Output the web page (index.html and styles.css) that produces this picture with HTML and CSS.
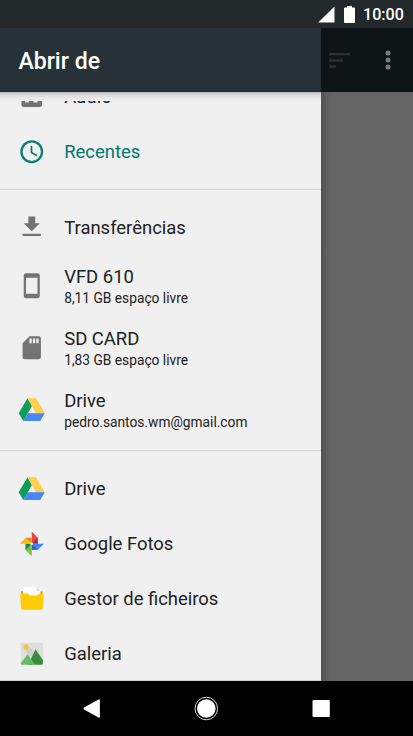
FILE: index.html
```html
<!DOCTYPE html>
<html lang="pt">
<head>
<meta charset="utf-8">
<title>Abrir de</title>
<link rel="stylesheet" href="styles.css">
</head>
<body>
<div class="screen">
  <header class="status">
    <svg class="signal" viewBox="0 0 17 17"><path d="M16.5.5v16H.2z"/></svg>
    <svg class="battery" viewBox="0 0 11 17"><path d="M3 0h5v1.5h2q1 0 1 1V16q0 1-1 1H1q-1 0-1-1V2.500q0-1 1-1h2z"/></svg>
    <span class="time">10:00</span>
  </header>
  <div class="bars">
    <h1 class="title">Abrir de</h1>
    <div class="actions">
      <svg class="sort" viewBox="0 0 21 15"><path d="M0 0h21v2.300H0zM0 6.200h14v2.300H0zM0 12.300h7v2.300H0z"/></svg>
      <svg class="more" viewBox="0 0 6 20"><circle cx="3" cy="3" r="2.500"/><circle cx="3" cy="10" r="2.500"/><circle cx="3" cy="17" r="2.500"/></svg>
    </div>
  </div>
  <div class="content">
    <nav class="drawer">
      <div class="viewport">
        <div class="list">
          <div class="row">
            <svg class="icon" viewBox="0 0 24 24"><path d="M3 3h18v16q0 2-2 2H5q-2 0-2-2zM6.300 11v6h3.200v-6zM13.500 11v6h3.500v-6z" fill-rule="evenodd"/></svg>
            <span class="label">Áudio</span>
          </div>
          <div class="row active">
            <svg class="icon" viewBox="0 0 24 24"><path d="M11.990 2C6.470 2 2 6.480 2 12s4.470 10 9.990 10C17.520 22 22 17.520 22 12S17.520 2 11.990 2zM12 20a8 8 0 1 1 0-16 8 8 0 0 1 0 16zM12.500 7H11v6l5.250 3.150.75-1.230-4.500-2.670z"/></svg>
            <span class="label">Recentes</span>
          </div>
          <hr class="divider">
          <div class="row">
            <svg class="icon" viewBox="0 0 24 24"><path d="M19 9h-4V3H9v6H5l7 7 7-7zM4 18v2h16v-2H4z"/></svg>
            <span class="label">Transferências</span>
          </div>
          <div class="row double">
            <svg class="icon" viewBox="0 0 24 24"><path d="M17 1H7a2 2 0 0 0-2 2v18a2 2 0 0 0 2 2h10a2 2 0 0 0 2-2V3a2 2 0 0 0-2-2zm0 18H7V5h10v14z"/></svg>
            <div class="text"><span class="label">VFD 610</span><span class="sub">8,11 GB espaço livre</span></div>
          </div>
          <div class="row double">
            <svg class="icon" viewBox="0 0 24 24"><path d="M18 2h-8L4.020 8 4 20a2 2 0 0 0 2 2h12a2 2 0 0 0 2-2V4a2 2 0 0 0-2-2zm-6 6h-2V4h2v4zm3 0h-2V4h2v4zm3 0h-2V4h2v4z"/></svg>
            <div class="text"><span class="label">SD CARD</span><span class="sub">1,83 GB espaço livre</span></div>
          </div>
          <div class="row double">
            <svg class="icon" viewBox="0 0 24 24"><path fill="#109d59" d="M8.300 2 12.200 8.700 4.700 21.800.600 15z"/><path fill="#ffd04b" d="M8.300 2h7.400l7.700 13h-7.700z"/><path fill="#4587f4" d="M8.500 15h14.900l-4 6.800H4.700z"/></svg>
            <div class="text"><span class="label">Drive</span><span class="sub">pedro.santos.wm@gmail.com</span></div>
          </div>
          <hr class="divider">
          <div class="row">
            <svg class="icon" viewBox="0 0 24 24"><path fill="#109d59" d="M8.300 2 12.200 8.700 4.700 21.800.600 15z"/><path fill="#ffd04b" d="M8.300 2h7.400l7.700 13h-7.700z"/><path fill="#4587f4" d="M8.500 15h14.900l-4 6.800H4.700z"/></svg>
            <span class="label">Drive</span>
          </div>
          <div class="row">
            <svg class="icon" viewBox="0 0 24 24"><path fill="#df4b3e" d="M12 1.200 17.200 6.800V12H12z"/><path fill="#a52a4b" d="M12 12l5.200-5.200V12z"/><path fill="#4285f4" d="M12 12h10.700l-5.400 5.200H12z"/><path fill="#3163c5" d="M12 12l5.300 5.200H12z"/><path fill="#7cc04b" d="M12 12v10.800l-5.400-5.400V12z"/><path fill="#188a4c" d="M12 12l-5.400 5.400V12z"/><path fill="#fbbc16" d="M12 12H1.300l5.400-5.300H12z"/><path fill="#ee8b22" d="M12 12 6.700 6.700H12z"/><circle cx="12" cy="12" r="1.200" fill="#f5e8df"/></svg>
            <span class="label">Google Fotos</span>
          </div>
          <div class="row">
            <svg class="icon" viewBox="0 0 24 24"><path fill="#d9971d" d="M2.600 5.500h18.800V15H2.600z"/><path fill="#fcfcfc" d="M4.300 1.700h12l3.300 3.500V15H4.300z"/><path fill="#dedede" d="M16.300 1.700l3.300 3.500h-3.300z"/><path fill="#fecb05" d="M2.600 7.500h6l2 1.700h6l2-1.300h3q.6 0 .6.700l-.4 11.200q-.1 1.800-1.600 1.800H4q-1.200 0-1.300-1.800L2 8.400q0-.9.600-.9z"/></svg>
            <span class="label">Gestor de ficheiros</span>
          </div>
          <div class="row">
            <svg class="icon" viewBox="0 0 24 24"><rect x="2.300" y="2.300" width="19.400" height="19.400" rx="1.200" fill="#dfdfdf"/><path fill="#cfcfcf" d="M8.500 4.500l7 7-5 3-5-7z"/><circle cx="6.900" cy="6" r="2.300" fill="#f4c62b"/><path fill="#388e3c" d="M15.300 8l6.400 9.500v3q0 1.200-1.200 1.200H9z"/><path fill="#66bb6a" d="M8.400 12.500 15 21.700H3.500q-1.200 0-1.200-1.200z"/></svg>
            <span class="label">Galeria</span>
          </div>
        </div>
      </div>
    </nav>
    <div class="scrim"></div>
  </div>
  <footer class="nav">
    <svg class="keys" viewBox="0 0 413 55"><path d="M84 26.500 98.500 18.500q1.400-.7 1.400.9v16.200q0 1.600-1.400.9L84 28.600q-1.300-1 0-2.100z"/><circle class="ring" cx="206.300" cy="27.500" r="11.300"/><circle cx="206.300" cy="27.500" r="9.300"/><rect x="312.500" y="19" width="17.300" height="17" rx="1"/></svg>
  </footer>
</div>
</body>
</html>
```
FILE: styles.css
```css
* { box-sizing: border-box; }
body { margin: 0; font-family: Roboto, "Liberation Sans", sans-serif; }
svg { display: block; flex: none; }
.screen { width: 413px; height: 736px; display: flex; flex-direction: column; overflow: hidden; background: #f0f0f0; }
.status { height: 28px; flex: none; display: flex; align-items: center; justify-content: flex-end; padding-right: 9px; background: #23282b; color: #fff; fill: #fff; }
.signal { width: 17px; height: 17px; margin-right: 9px; }
.battery { width: 11px; height: 17px; margin-right: 8px; }
.time { width: 41px; padding-top: 1px; font-size: 16.1px; font-weight: 500; line-height: 28px; white-space: nowrap; }
.bars { height: 64px; flex: none; display: flex; }
.title { width: 321px; margin: 0; padding: 2px 0 0 18.400px; background: #263238; color: #fff; font-size: 23.100px; font-weight: 500; line-height: 64px; }
.actions { flex: 1; display: flex; align-items: center; padding-left: 8px; background: #0f1417; }
.sort { width: 21px; height: 15px; margin-right: 35px; fill: #2c3032; }
.more { width: 6px; height: 20px; fill: #777a7b; }
.content { height: 589px; flex: none; display: flex; }
.drawer { width: 321px; padding-top: 9px; background: linear-gradient(#b8b8b8, #dadada 3px, #ebebeb 7px, #f0f0f0 10px); }
.viewport { height: 580px; overflow: hidden; border-bottom: 1px solid #d0d0d0; }
.list { margin-top: -31.300px; }
.row { height: 55.100px; display: flex; align-items: center; padding-left: 18.400px; color: #212121; }
.double { height: 62px; }
.icon { width: 27.500px; height: 27.500px; margin: 0 18.300px 1px 0; fill: #737373; }
.label { font-size: 18.450px; line-height: 22px; white-space: nowrap; }
.text { display: flex; flex-direction: column; padding-top: 3px; }
.sub { font-size: 13.750px; line-height: 21px; white-space: nowrap; }
.active { color: #00796b; }
.active .icon { fill: #087f70; }
.divider { height: 1px; margin: 9px 0 10.200px; border: 0; background: #d2d2d2; }
.scrim { flex: 1; background: linear-gradient(90deg, #505050, #5e5e5e 5px, #656565 12px); }
.nav { height: 55px; flex: none; background: #000; }
.keys { width: 413px; height: 55px; fill: #fff; }
.ring { fill: none; stroke: #d8d8d8; stroke-width: 1; }
```
